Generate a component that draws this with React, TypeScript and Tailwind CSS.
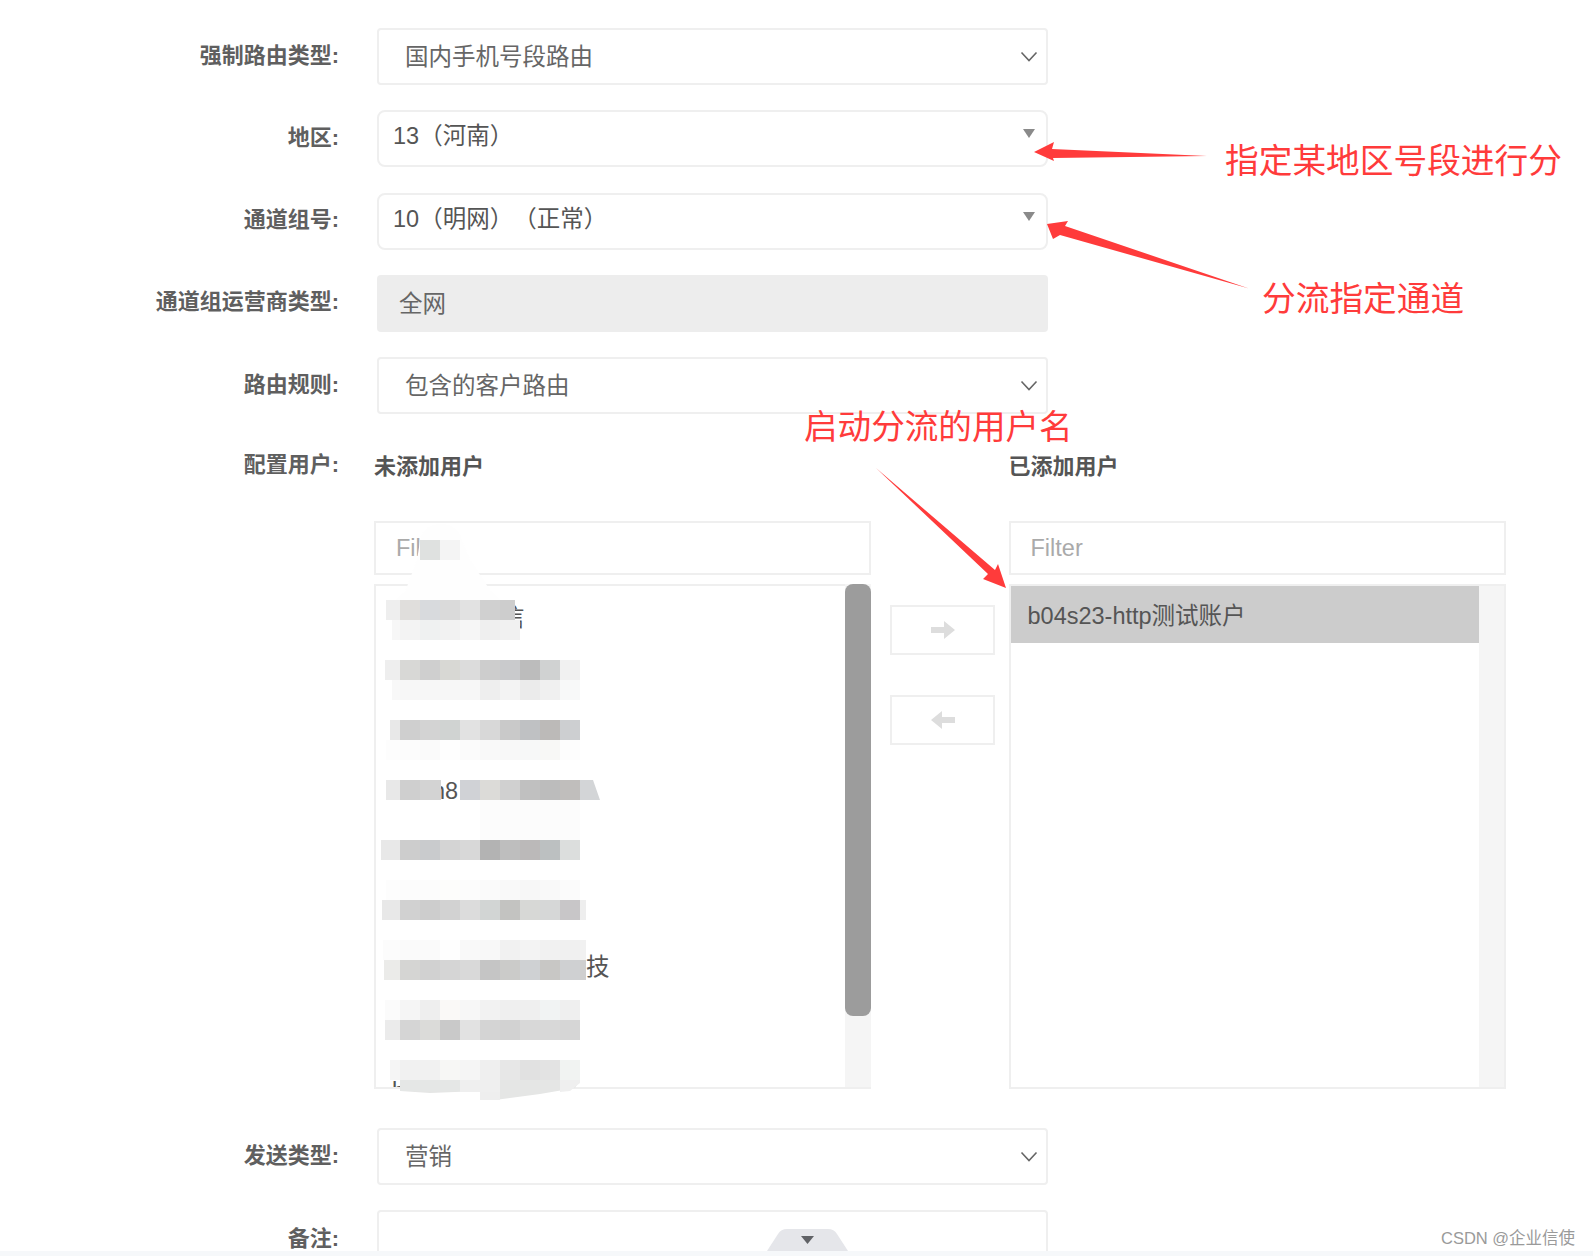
import React from "react";

type MosaicRow = [number, number, string, string[]];

const mosaic: MosaicRow[] = [
  [600, 386, "#eeeeee", ["#e0dedc", "#d8dadd", "#dadada", "#e2e2e2", "#d0d0d0", "#cdcdcd"]],
  [620, 392, "#f7f7f7", ["#f3f3f3", "#eff1f1", "#f2f2f2", "#f6f6f6", "#efefef", "#f1f1f1"]],
  [660, 385, "#eeeeee", ["#d8d8d6", "#cfcfcf", "#d8d8d4", "#dcdcdc", "#cdcdcd", "#c9cacc", "#bcbcbc", "#d0d2d2", "#f1f1f1"]],
  [680, 392, "#f8f8f8", ["#f7f7f7", "#f7f7f7", "#f7f7f7", "#f7f7f7", "#eeeeee", "#f3f3f3", "#ebebeb", "#f0f0f0", "#f8f9f9"]],
  [720, 390, "#e8e8e8", ["#cfcfcf", "#d3d3d3", "#d0d3d2", "#e2e2e2", "#d8d8d8", "#c9c9c9", "#bfc1c3", "#bcbab8", "#cdcfd1"]],
  [740, 386, "#fdfdfd", ["#fcfcfc", "#fafafa", "#fefefe", "#fbfbfb", "#f9f9f9", "#f8f8f8", "#f7f8f8", "#f8f8f6", "#fdfdfd"]],
  [840, 381, "#e8e8e8", ["#cdcdcd", "#c9cbcd", "#d4d4d4", "#d8d8d8", "#b3b3b3", "#bebebe", "#bbb9b9", "#bcc0c1", "#dcdedd"]],
  [880, 386, "#fdfdfd", ["#fcfcfc", "#fcfcfc", "#fdfdfb", "#fcfcfc", "#fafafa", "#f9f9f9", "#f7f7f7", "#f9f9f9", "#fbfbfb"]],
  [900, 382, "#e8e8e8", ["#d1d1d1", "#cdcdcd", "#d2d2d2", "#dcdcdc", "#d2d5d4", "#c3c3c1", "#d7d8d6", "#d6d7d7", "#c8c6c8", "#eeeeee"]],
  [940, 383, "#fcfcfc", ["#fafafa", "#fafafa", "#fefefe", "#f9f9f9", "#f8f8f8", "#f1f1f1", "#f3f3f3", "#f1f1f1", "#f0f0f0", "#f1f1f1"]],
  [960, 384, "#ebebe9", ["#d5d5d3", "#d1d1d1", "#d5d5d5", "#d9d9d9", "#c5c5c5", "#cbcbc9", "#cfd1d3", "#c8c7c5", "#cfd0d2", "#cfcfcf"]],
  [1000, 385, "#fbfbfb", ["#f5f5f5", "#eeeeee", "#faf9f7", "#f7f7f7", "#f2f2f2", "#efefef", "#efefef", "#f1f3f3", "#efefef"]],
  [1020, 385, "#ebebeb", ["#d5d5d5", "#dbdbd9", "#c9c9c9", "#e2e2e2", "#d4d4d4", "#d2d2d2", "#d8d8d8", "#d8d8d8", "#d6d6d6"]],
  [1060, 390, "#f5f5f5", ["#f1f1f1", "#f1f1f1", "#f7f7f5", "#f5f5f5", "#efefef", "#e7e7e7", "#e1e1e1", "#e3e3e3", "#f1f3f2"]],
];

function Chevron() {
  return (
    <svg width="18" height="11" viewBox="0 0 18 11" className="shrink-0">
      <path d="M1.5 1.5 L9 9.5 L16.5 1.5" fill="none" stroke="#666666" strokeWidth="1.6" />
    </svg>
  );
}

function Label({ text }: { text: string }) {
  return (
    <div className="w-[339px] shrink-0 pb-[3px] text-right text-[22px] font-bold text-[#5f5f5f]">{text}</div>
  );
}

function SelectRow({ label, value }: { label: string; value: string }) {
  return (
    <div className="flex h-[57px] items-center">
      <Label text={label} />
      <div className="ml-[38px] flex h-full w-[671px] items-center justify-between rounded-sm border-2 border-[#efefef] pl-[26px] pr-[8px] text-[23.5px] text-[#666666]">
        <span className="pt-[3px]">{value}</span>
        <Chevron />
      </div>
    </div>
  );
}

function ComboRow({ label, value }: { label: string; value: string }) {
  return (
    <div className="flex h-[57px] items-center">
      <Label text={label} />
      <div className="ml-[38px] flex h-full w-[671px] justify-between rounded-lg border-2 border-[#efefef] pl-[14px] pr-[11px] pt-[7px] text-[23.5px] text-[#555555] [text-spacing-trim:space-all]">
        <span>{value}</span>
        <span className="mt-[10px] h-0 w-0 border-x-[6px] border-t-[9px] border-x-transparent border-t-[#8a8a8a]" />
      </div>
    </div>
  );
}

function FilterBox() {
  return (
    <input
      readOnly
      placeholder="Filter"
      className="h-[54px] w-full border-2 border-[#efefef] bg-white px-[20px] text-[23.5px] text-[#555555] outline-none placeholder:text-[#aaaaaa]"
    />
  );
}

function Fragment({ pad, text }: { pad: string; text: string }) {
  return (
    <div className={`flex h-[58.7px] shrink-0 items-center text-[23.5px] text-[#555555] ${pad}`}>{text}</div>
  );
}

export default function App() {
  return (
    <div className="relative h-[1256px] w-[1593px] overflow-hidden bg-white pt-[28px] font-['Liberation_Sans','Noto_Sans_CJK_SC',sans-serif]">
      <div className="flex flex-col gap-[25.25px]">
        <SelectRow label="强制路由类型:" value="国内手机号段路由" />
        <ComboRow label="地区:" value="13（河南）" />
        <ComboRow label="通道组号:" value="10（明网）（正常）" />
        <div className="flex h-[57px] items-center">
          <Label text="通道组运营商类型:" />
          <div className="ml-[38px] flex h-full w-[671px] items-center rounded-sm bg-[#ededed] pl-[22px] pt-[2px] text-[23.5px] text-[#666666]">
            全网
          </div>
        </div>
        <SelectRow label="路由规则:" value="包含的客户路由" />
      </div>

      <div className="mt-[37px] flex">
        <div className="flex h-[30px] items-center">
          <Label text="配置用户:" />
        </div>
        <div className="ml-[35px] w-[497px] shrink-0">
          <div className="mb-[40px] flex h-[30px] items-center text-[22px] font-bold text-[#555555]">未添加用户</div>
          <FilterBox />
          <div className="mt-[9px] flex h-[505px] border-2 border-[#efefef]">
            <div className="flex min-w-0 flex-1 flex-col overflow-hidden">
              <Fragment pad="pl-[125px] pt-[6px]" text="信" />
              <Fragment pad="" text="" />
              <Fragment pad="" text="" />
              <Fragment pad="pl-[56px]" text="h8" />
              <Fragment pad="" text="" />
              <Fragment pad="" text="" />
              <Fragment pad="pl-[210px]" text="技" />
              <Fragment pad="" text="" />
              <Fragment pad="pl-[16px] pt-[14px]" text="b" />
            </div>
            <div className="-mr-[2px] -mt-[2px] h-[503px] w-[26px] shrink-0 bg-[#f5f5f5]">
              <div className="h-[432px] rounded-lg bg-[#9c9c9c]" />
            </div>
          </div>
        </div>
        <div className="ml-[19px] mt-[154px] flex w-[105px] shrink-0 flex-col gap-[40px]">
          <button className="flex h-[50px] items-center justify-center border-2 border-[#efefef] bg-white">
            <svg width="24" height="18" viewBox="0 0 24 18">
              <polygon points="0,6 13,6 13,0 24,9 13,18 13,12 0,12" fill="#dddddd" />
            </svg>
          </button>
          <button className="flex h-[50px] items-center justify-center border-2 border-[#efefef] bg-white">
            <svg width="24" height="18" viewBox="0 0 24 18">
              <polygon points="24,6 11,6 11,0 0,9 11,18 11,12 24,12" fill="#dddddd" />
            </svg>
          </button>
        </div>
        <div className="ml-[13.5px] w-[497px] shrink-0">
          <div className="mb-[40px] flex h-[30px] items-center text-[22px] font-bold text-[#555555]">已添加用户</div>
          <FilterBox />
          <div className="mt-[9px] flex h-[505px] border-2 border-[#efefef]">
            <div className="min-w-0 flex-1">
              <div className="flex h-[57px] items-center bg-[#cccccc] pl-[17px] pt-[4px] text-[23.5px] text-[#555555]">b04s23-http测试账户</div>
            </div>
            <div className="w-[25px] shrink-0 bg-[#f5f5f5]" />
          </div>
        </div>
      </div>

      <div className="mt-[39px]">
        <SelectRow label="发送类型:" value="营销" />
      </div>
      <div className="mt-[25px] flex h-[60px] items-start">
        <div className="pt-[12px]">
          <Label text="备注:" />
        </div>
        <div className="ml-[38px] h-full w-[671px] rounded-sm border-2 border-[#efefef]" />
      </div>

      <svg className="pointer-events-none absolute left-0 top-0" width="1593" height="1256" viewBox="0 0 1593 1256">
        <path d="M441 524 C428 524 421 532 420 541 L417 560 L405 592 L392 604 L392 640 L500 640 L500 600 L490 590 L470 560 L462 541 C460 530 452 524 441 524 Z" fill="#fefefe" />
        <rect x="420" y="540" width="20" height="20" fill="#dfe1e0" />
        <rect x="440" y="540" width="20" height="20" fill="#f4f4f4" />
        {mosaic.map(([y, lx, lc, cells]) => (
          <g key={y}>
            <rect x={lx} y={y} width={400 - lx} height="20" fill={lc} />
            {cells.map((c, i) => (
              <rect
                key={i}
                x={400 + i * 20}
                y={y}
                width={i === 9 ? 6 : y === 600 && i === 5 ? 15 : 20}
                height="20"
                fill={c}
              />
            ))}
          </g>
        ))}
        <rect x="386" y="780" width="14" height="20" fill="#e8e8e8" />
        <rect x="400" y="780" width="20" height="20" fill="#cfcfcf" />
        <rect x="420" y="780" width="21" height="20" fill="#d3d3d3" />
        {["#d0d2d6", "#dcdbd8", "#d0d0d0", "#c0c0c0", "#bcbcbc", "#c0bebc"].map((c, i) => (
          <rect key={c} x={460 + i * 20} y="780" width="20" height="20" fill={c} />
        ))}
        <polygon points="580,780 593,780 600,800 580,800" fill="#d3d5d7" />
        <rect x="480" y="800" width="100" height="40" fill="#fcfcfc" />
        <polygon points="400,1080 400,1091 430,1093 480,1091 480,1100 495,1100 540,1094 575,1088 580,1080" fill="#e5e6e5" />
        <rect x="400" y="1080" width="60" height="11" fill="#e5e7e6" />
        <rect x="460" y="1080" width="40" height="12" fill="#efefef" />
        <rect x="480" y="1092" width="20" height="8" fill="#eeeeee" />
        <polygon points="560,1080 580,1080 580,1083 570,1091 560,1092" fill="#efefef" />

        <polygon points="1034,152 1054,142 1052,149 1207,156 1053,158 1054,161" fill="#ff3b3b" />
        <polygon points="1047,224 1068,221 1065,226 1249,288.5 1060,235 1053,239" fill="#ff3b3b" />
        <polygon points="876,468 995,570 998,564 1006,588 983,579 988,574" fill="#ff3b3b" />

        <path d="M767 1251 L778 1234 Q781 1229 787 1229 L828 1229 Q834 1229 837 1234 L848 1251 Z" fill="#e5e6ea" />
        <polygon points="801,1236 814,1236 807.5,1244" fill="#606266" />
      </svg>

      <div className="absolute bottom-0 left-0 h-[5px] w-full bg-[#f6f8fa]" />
      <div className="absolute left-[1225px] top-[140px] whitespace-nowrap text-[33.7px] leading-[42px] text-[#ff3b3b]">指定某地区号段进行分</div>
      <div className="absolute left-[1262px] top-[278px] whitespace-nowrap text-[33.7px] leading-[42px] text-[#ff3b3b]">分流指定通道</div>
      <div className="absolute left-[804px] top-[407px] whitespace-nowrap text-[33.6px] leading-[42px] text-[#ff3b3b]">启动分流的用户名</div>
      <div className="absolute left-[1441px] top-[1227px] whitespace-nowrap text-[16.5px] leading-[22px] text-[#9a9a9a]">CSDN @企业信使</div>
    </div>
  );
}
